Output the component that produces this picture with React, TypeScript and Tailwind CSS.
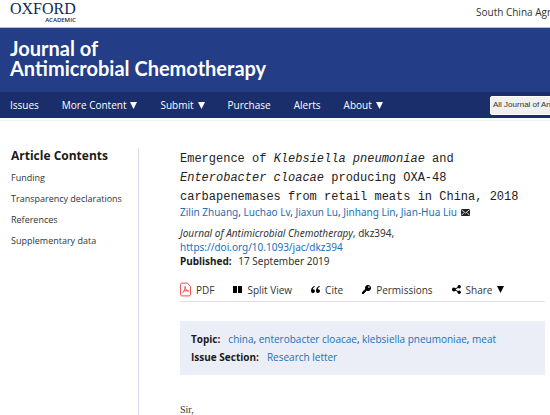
const navItems = [
  { label: 'Issues', menu: false },
  { label: 'More Content', menu: true },
  { label: 'Submit', menu: true },
  { label: 'Purchase', menu: false },
  { label: 'Alerts', menu: false },
  { label: 'About', menu: true },
]

const contents = ['Funding', 'Transparency declarations', 'References', 'Supplementary data']

const authors = ['Zilin Zhuang', 'Luchao Lv', 'Jiaxun Lu', 'Jinhang Lin', 'Jian-Hua Liu']

const topics = ['china', 'enterobacter cloacae', 'klebsiella pneumoniae', 'meat']

function Caret() {
  return (
    <svg className="h-[7px] w-[7px]" viewBox="0 0 7 7" fill="currentColor" aria-hidden="true">
      <path d="M0 0h7L3.5 7z" />
    </svg>
  )
}

function PdfIcon() {
  return (
    <svg className="h-[15px] w-[11px]" viewBox="0 0 12 15" fill="none" stroke="#ee3a43" aria-hidden="true">
      <path d="M2 .5h5.8L11.5 4v9.2c0 .7-.6 1.3-1.3 1.3H2c-.8 0-1.5-.7-1.5-1.5V2C.5 1.1 1.1.5 2 .5z" />
      <path d="M5.5 4.3c.1 3-1 5.700-3 7 M5.5 4.300c.2 2.7 1.500 4.700 4 5.200 M3.5 9.600c1.600-.8 3.700-1.100 6-.4" />
    </svg>
  )
}

function SplitIcon() {
  return (
    <svg className="h-[7px] w-[9px]" viewBox="0 0 9 7" fill="currentColor" aria-hidden="true">
      <path d="M0 0h4v7H0zM5 0h4v7H5z" />
    </svg>
  )
}

function QuoteIcon() {
  return (
    <svg className="h-[7px] w-[9px]" viewBox="0 0 9 7" fill="currentColor" aria-hidden="true">
      <path d="M3.700 0C1.500.5 0 2.300 0 4.700 0 6.100.8 7 2 7s2-.8 2-1.900-.7-1.900-1.700-1.900h-.5C2 2.100 2.600 1.200 3.900.8zM8.700 0C6.500.5 5 2.300 5 4.700 5 6.100 5.800 7 7 7s2-.8 2-1.900-.7-1.900-1.700-1.900h-.5C7 2.100 7.600 1.200 8.900.8z" />
    </svg>
  )
}

function KeyIcon() {
  return (
    <svg className="h-[9px] w-[9px]" viewBox="0 0 9 9" fill="currentColor" aria-hidden="true">
      <path
        fillRule="evenodd"
        d="M6 0a3 3 0 0 0-2.800 4L0 7.200V9h2V8h1V7h1V6l.7-.3A3 3 0 1 0 6 0zm.9 1.300a.8.8 0 1 1 0 1.600.8.8 0 0 1 0-1.600z"
      />
    </svg>
  )
}

function ShareIcon() {
  return (
    <svg className="h-[9px] w-[9px]" viewBox="0 0 9 9" fill="currentColor" aria-hidden="true">
      <path d="M2 4.500 7 2M2 4.500 7 7" stroke="currentColor" />
      <circle cx="1.900" cy="4.500" r="1.900" />
      <circle cx="7.200" cy="1.800" r="1.700" />
      <circle cx="7.200" cy="7.200" r="1.700" />
    </svg>
  )
}

function MailIcon() {
  return (
    <svg className="h-[7px] w-[9px]" viewBox="0 0 9 7" aria-hidden="true">
      <path fill="#222" d="M0 0h9v7H0z" />
      <path fill="none" stroke="#fff" strokeWidth=".8" d="M.3.7 4.500 4 8.700.7M.5 6.300 3 3.600M8.500 6.300 6 3.600" />
    </svg>
  )
}

const tools = [
  { label: 'PDF', icon: <PdfIcon />, menu: false },
  { label: 'Split View', icon: <SplitIcon />, menu: false },
  { label: 'Cite', icon: <QuoteIcon />, menu: false },
  { label: 'Permissions', icon: <KeyIcon />, menu: false },
  { label: 'Share', icon: <ShareIcon />, menu: true },
]

export default function App() {
  return (
    <div className="flex min-h-screen flex-col overflow-hidden bg-white font-['Open_Sans','Noto_Sans',sans-serif] text-[10px] leading-4 text-[#333]">
      <header>
        <div className="flex h-7 items-start justify-between overflow-hidden border-b border-[#b4bde0] pl-[10px] whitespace-nowrap">
          <a href="#" className="flex flex-col items-end pt-px text-[#14284f]">
            <span className="font-['Liberation_Serif',serif] text-[16px] leading-4">OXFORD</span>
            <span className="text-[6px] leading-[6px] font-semibold">ACADEMIC</span>
          </a>
          <a href="#" className="w-[74px] pt-1">
            South China Agricultural University
          </a>
        </div>

        <div className="bg-[#233d87] px-[10px] pt-[10px] pb-[14px]">
          <a href="#" className="block font-['Lato',sans-serif] text-[20px] leading-5 font-bold text-white">
            Journal of
            <br />
            Antimicrobial Chemotherapy
          </a>
        </div>

        <nav className="flex h-[26px] items-center justify-between gap-4 overflow-hidden bg-[#1a2e6c] pl-[10px] whitespace-nowrap text-white">
          <ul className="flex items-center gap-[23px]">
            {navItems.map((item) => (
              <li key={item.label}>
                {item.menu ? (
                  <button type="button" className="flex items-center gap-1">
                    {item.label}
                    <Caret />
                  </button>
                ) : (
                  <a href="#">{item.label}</a>
                )}
              </li>
            ))}
          </ul>
          <select
            aria-label="Search scope"
            className="-mr-[130px] h-[19px] w-[190px] shrink-0 appearance-none rounded-xs border border-white bg-[#f0f0f0] pl-[2px] font-['Liberation_Sans',sans-serif] text-[8px] text-[#333]"
          >
            <option>All Journal of Antimicrobial Chemotherapy</option>
          </select>
        </nav>
        <div className="h-[3px] border-b border-[#f0f0f0]" />
      </header>

      <div className="flex flex-1 pt-[27px]">
        <aside className="w-[139px] shrink-0 border-r border-[#dcdcf0] pl-[11px]">
          <h2 className="text-[12px] leading-[15px] font-bold text-[#1a1a1a]">Article Contents</h2>
          <ul className="mt-1 whitespace-nowrap">
            {contents.map((item) => (
              <li key={item} className="text-[9px] leading-[21px]">
                <a href="#">{item}</a>
              </li>
            ))}
          </ul>
        </aside>

        <main className="min-w-0 flex-1 pt-[2px] pr-[5px] pl-[41px]">
          <h1 className="font-['Liberation_Mono',monospace] text-[12px] leading-[19px] text-[#222]">
            Emergence of <em>Klebsiella pneumoniae</em> and
            <br />
            <em>Enterobacter cloacae</em> producing OXA-48
            <br />
            carbapenemases from retail meats in China, 2018
          </h1>

          <p className="flex items-center gap-1 font-['Noto_Sans',sans-serif] leading-[11px] whitespace-nowrap">
            <span>
              {authors.map((name, i) => (
                <span key={name}>
                  {i > 0 && ', '}
                  <a href="#" className="text-[#1a70b8]">
                    {name}
                  </a>
                </span>
              ))}
            </span>
            <a href="#" aria-label="Email the author">
              <MailIcon />
            </a>
          </p>

          <div className="mt-2 font-['Noto_Sans',sans-serif] leading-[14px]">
            <p>
              <em>Journal of Antimicrobial Chemotherapy</em>, dkz394,
            </p>
            <a href="#" className="block text-[#1a70b8]">
              https://doi.org/10.1093/jac/dkz394
            </a>
            <p>
              <strong className="mr-1 text-[#1a1a1a]">Published:</strong> 17 September 2019
            </p>
          </div>

          <div className="mt-[10px] flex h-6 items-center gap-[19px] border-b border-[#dcdcf0] whitespace-nowrap">
            {tools.map((tool) => (
              <button key={tool.label} type="button" className="flex items-center gap-[5px] text-black">
                {tool.icon}
                <span className="text-[#333]">{tool.label}</span>
                {tool.menu && <Caret />}
              </button>
            ))}
          </div>

          <dl className="mt-[19px] bg-[#ebeef6] px-[11px] py-[9px] leading-[18px]">
            <div className="flex gap-2">
              <dt className="font-bold text-[#1a1a1a]">Topic:</dt>
              <dd>
                {topics.map((topic, i) => (
                  <span key={topic}>
                    {i > 0 && ', '}
                    <a href="#" className="text-[#1a70b8]">
                      {topic}
                    </a>
                  </span>
                ))}
              </dd>
            </div>
            <div className="flex gap-2">
              <dt className="font-bold text-[#1a1a1a]">Issue Section:</dt>
              <dd>
                <a href="#" className="text-[#1a70b8]">
                  Research letter
                </a>
              </dd>
            </div>
          </dl>

          <p className="mt-[30px] font-['Liberation_Serif',serif] leading-[10px]">Sir,</p>
        </main>
      </div>
    </div>
  )
}
